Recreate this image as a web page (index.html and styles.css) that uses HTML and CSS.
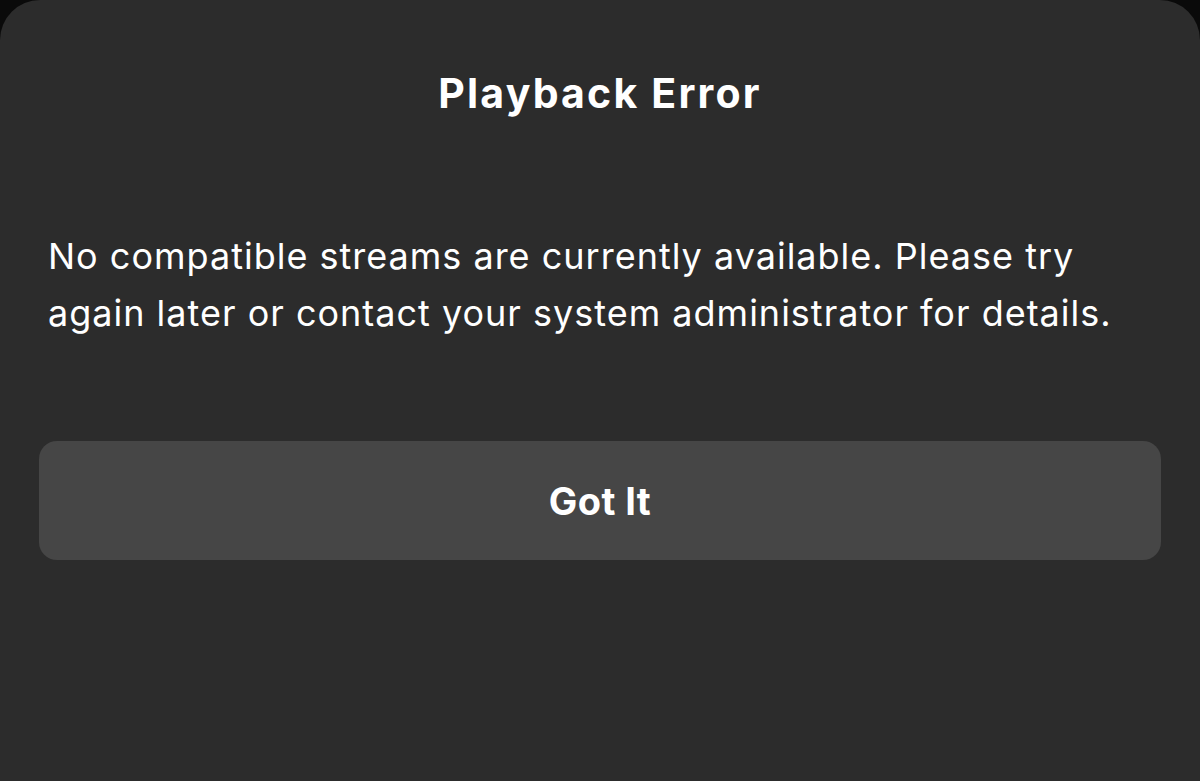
FILE: index.html
```html
<!DOCTYPE html>
<html>
<head>
<meta charset="utf-8">
<link rel="stylesheet" href="styles.css">
</head>
<body>
<div class="sheet">
  <h1 class="title">Playback Error</h1>
  <p class="message">No compatible streams are currently available. Please try again later or contact your system administrator for details.</p>
  <button class="btn">Got It</button>
</div>
</body>
</html>
```

FILE: styles.css
```css
html, body {
  margin: 0;
  padding: 0;
  background: #0a0a0a;
  height: 100%;
  overflow: hidden;
}
body {
  font-family: Inter, "Noto Sans", "Liberation Sans", sans-serif;
  color: #ffffff;
}
.sheet {
  background: #2c2c2c;
  border-radius: 40px 40px 0 0;
  height: 781px;
  box-sizing: border-box;
  padding: 65px 39px 0 39px;
  display: flex;
  flex-direction: column;
}
.title {
  margin: 0;
  text-align: center;
  font-size: 41px;
  font-weight: 700;
  line-height: 56px;
  letter-spacing: 2.2px;
}
.message {
  margin: 107px 9px 0 9px;
  font-size: 36px;
  font-weight: 400;
  line-height: 57px;
  letter-spacing: 1px;
}
.btn {
  margin-top: 99px;
  height: 119px;
  width: 100%;
  flex: none;
  border: none;
  border-radius: 18px;
  background: #464646;
  color: #ffffff;
  font-family: inherit;
  font-size: 38px;
  font-weight: 700;
  letter-spacing: 0.4px;
  padding: 0;
}
```
